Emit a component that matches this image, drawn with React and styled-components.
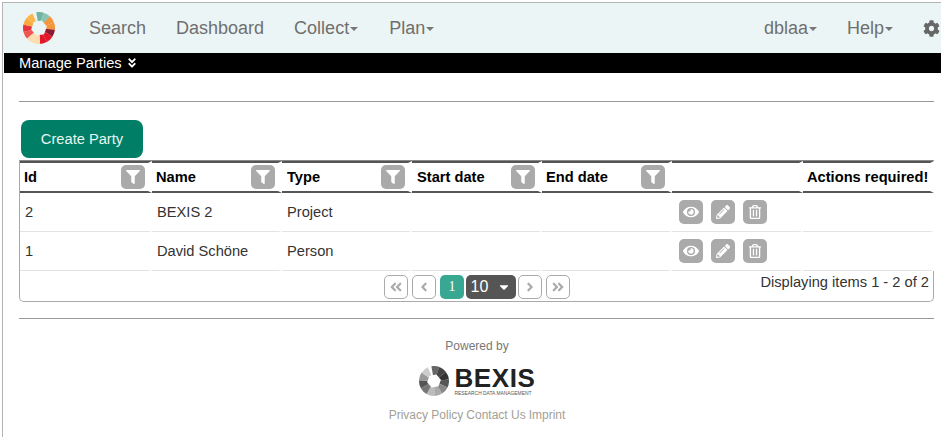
import React from 'react';
import styled, { createGlobalStyle } from 'styled-components';
import {
  FaFilter, FaEye, FaPencilAlt, FaRegTrashAlt, FaCog, FaAngleDoubleDown,
  FaAngleDoubleLeft, FaAngleDoubleRight, FaAngleLeft, FaAngleRight, FaCaretDown,
} from 'react-icons/fa';

const GlobalStyle = createGlobalStyle`
  html, body {
    margin: 0;
    padding: 0;
    background: #fff;
    font-family: "Liberation Sans", Arial, sans-serif;
    overflow: hidden;
  }
`;

const Page = styled.div`
  margin: 2px 0 0 2px;
  border-top: 1px solid #b4b4b4;
  border-left: 1px solid #b4b4b4;
  height: 434px;
  overflow: hidden;
`;

const NavBar = styled.nav`
  display: flex;
  align-items: center;
  height: 50px;
  background: #ecf5f5;
  padding-left: 20px;
`;

const NavLink = styled.a`
  display: inline-flex;
  align-items: center;
  color: #6f6f6f;
  font-size: 18px;
  margin-left: ${p => p.$gap}px;
`;

const Caret = styled.span`
  display: inline-block;
  margin-left: 1px;
  margin-top: 2px;
  border-top: 4px solid #777;
  border-left: 4px solid transparent;
  border-right: 4px solid transparent;
`;

const Spacer = styled.div`
  flex: 1;
`;

const Gear = styled(FaCog)`
  color: #666;
  font-size: 17px;
  margin: 0 1px 0 30px;
  flex: none;
`;

const SubBar = styled.div`
  display: flex;
  align-items: center;
  height: 20px;
  margin-left: 1px;
  padding-left: 15px;
  background: #000;
  color: #fff;
  font-size: 14.67px;
  gap: 4px;
  svg { font-size: 12px; }
`;

const Content = styled.main`
  padding: 28px 7px 0 16px;
`;

const Rule = styled.hr`
  margin: 0;
  border: 0;
  border-top: 1px solid #999;
`;

const CreateButton = styled.button`
  display: block;
  width: 122px;
  height: 38px;
  margin: 18px 0 2px 2px;
  border: 0;
  border-radius: 8px;
  background: #007f66;
  color: #e8f5f2;
  font-family: inherit;
  font-size: 14.67px;
`;

const TableBox = styled.div`
  height: 142px;
  box-sizing: border-box;
  border: 1px solid #aaa;
  border-top-color: #888;
  border-radius: 0 0 5px 5px;
  margin-bottom: 16px;
`;

const Table = styled.table`
  width: 914px;
  table-layout: fixed;
  border-collapse: separate;
  border-spacing: 0;
`;

const Th = styled.th`
  position: relative;
  box-sizing: border-box;
  height: 32px;
  padding: 0 ${p => (p.$right ? 2 : 0)}px 0 ${p => p.$pad || 4}px;
  text-align: ${p => (p.$right ? 'right' : 'left')};
  font-size: 14.67px;
  color: #000;
  border-top: 2px solid #555;
  border-bottom: 2px solid #555;
  border-right: 4px solid #fff;
  background-clip: padding-box;
  white-space: nowrap;
`;

const Td = styled.td`
  box-sizing: border-box;
  height: 39px;
  padding: 0 0 0 ${p => p.$pad || 5}px;
  font-size: 14.67px;
  color: #333;
  border-bottom: 1px solid #e3e3e3;
  border-right: 4px solid #fff;
`;

const IconButton = styled.span`
  display: inline-flex;
  align-items: center;
  justify-content: center;
  width: 24px;
  height: 24px;
  border-radius: 5px;
  background: #aaa;
  color: #fff;
  font-size: ${p => p.$size || 14}px;
`;

const FilterButton = styled(IconButton)`
  position: absolute;
  right: 3px;
  top: 2px;
`;

const Actions = styled.div`
  display: flex;
  gap: 8px;
`;

const Pager = styled.div`
  position: relative;
  display: flex;
  justify-content: center;
  align-items: center;
  gap: 4px;
  height: 24px;
  margin-top: 4px;
  padding-left: 1px;
`;

const PageBtn = styled.span`
  display: inline-flex;
  align-items: center;
  justify-content: center;
  box-sizing: border-box;
  width: 24px;
  height: 24px;
  border: 1px solid #aaa;
  border-radius: 5px;
  color: #aaa;
  font-size: 14px;
`;

const CurrentPage = styled(PageBtn)`
  border: 0;
  background: #38a892;
  color: #fff;
  font-family: "Liberation Serif", serif;
  font-size: 14px;
  margin-right: -2px;
`;

const SizeSelect = styled(PageBtn)`
  width: 50px;
  border: 0;
  background: #555;
  color: #fff;
  font-family: "Liberation Sans", sans-serif;
  font-size: 16px;
  gap: 9px;
  margin-right: -2px;
  svg { font-size: 14px; }
`;

const Count = styled.span`
  position: absolute;
  right: 4px;
  top: -1px;
  font-size: 14.67px;
  color: #333;
`;

const Footer = styled.footer`
  display: flex;
  flex-direction: column;
  align-items: center;
  padding: 20px 0 0 1px;
  font-size: 12px;
  color: #777;
`;

const BrandRow = styled.div`
  display: flex;
  align-items: center;
  gap: 5px;
  margin: 13px 0 12px 1px;
  height: 30px;
`;

const BrandText = styled.div`
  display: flex;
  flex-direction: column;
  color: #222;
`;

const BrandName = styled.span`
  font-size: 26px;
  line-height: 22px;
  font-weight: 700;
  letter-spacing: 0.6px;
  margin-bottom: 2px;
`;

const BrandSub = styled.span`
  font-size: 4.9px;
  line-height: 5px;
  color: #555;
  white-space: nowrap;
`;

const FooterLinks = styled.div`
  display: flex;
  gap: 3px;
  color: #a39f97;
`;

// ring cut in wedges with a six sided hole, used for both logos
const polar = (a, r) => {
  const t = (a * Math.PI) / 180;
  return `${(r * Math.cos(t)).toFixed(2)} ${(r * Math.sin(t)).toFixed(2)}`;
};

const wedge = (a1, a2, inner, outer) =>
  `M${polar(a1, inner)}L${polar(a1, outer)}A${outer} ${outer} 0 0 1 ${polar(a2, outer)}L${polar(a2, inner)}Z`;

const Ring = ({ size, colors, hole, bg }) => {
  const r = size / 2;
  const step = 345 / colors.length;
  const hex = [0, 1, 2, 3, 4, 5].map(i => polar(-70 + i * 60, hole)).join(' ');
  return (
    <svg width={size} height={size} viewBox={`${-r} ${-r} ${size} ${size}`}>
      {colors.map((c, i) => (
        <path key={i} d={wedge(-100 + i * step, -100 + (i + 1) * step + 0.4, hole - 2, r)} fill={c} />
      ))}
      <polygon points={hex} fill={bg} />
    </svg>
  );
};

const logoColors = [
  '#6fb3a0', '#8cc4b4', '#f5963a', '#f5963a', '#8a1a30', '#e3172b', '#e3172b',
  '#fddcae', '#fddcae', '#f0574f', '#e8323f', '#f9a93e', '#fbb54b',
];
const apertureColors = ['#666', '#444', '#333', '#555', '#888', '#aaa', '#bbb', '#777', '#555', '#999', '#ccc'];

const columns = ['Id', 'Name', 'Type', 'Start date', 'End date'];
const colWidths = [132, 130, 130, 130, 130, 131, 131];
const rows = [
  { id: 2, name: 'BEXIS 2', type: 'Project' },
  { id: 1, name: 'David Schöne', type: 'Person' },
];

export default function App() {
  return (
    <>
      <GlobalStyle />
      <Page>
        <NavBar>
          <Ring size={32} colors={logoColors} hole={8} bg="#ecf5f5" />
          <NavLink $gap={34}>Search</NavLink>
          <NavLink $gap={30}>Dashboard</NavLink>
          <NavLink $gap={30}>Collect<Caret /></NavLink>
          <NavLink $gap={31}>Plan<Caret /></NavLink>
          <Spacer />
          <NavLink $gap={0}>dblaa<Caret /></NavLink>
          <NavLink $gap={30}>Help<Caret /></NavLink>
          <Gear />
        </NavBar>
        <SubBar>Manage Parties <FaAngleDoubleDown /></SubBar>
        <Content>
          <Rule />
          <CreateButton>Create Party</CreateButton>
          <TableBox>
            <Table>
              <colgroup>
                {colWidths.map((w, i) => <col key={i} width={w} />)}
              </colgroup>
              <thead>
                <tr>
                  {columns.map(c => (
                    <Th key={c} $pad={c === 'Type' || c === 'Start date' ? 5 : 4}>
                      {c}
                      <FilterButton><FaFilter /></FilterButton>
                    </Th>
                  ))}
                  <Th />
                  <Th $right>Actions required!</Th>
                </tr>
              </thead>
              <tbody>
                {rows.map(r => (
                  <tr key={r.id}>
                    <Td>{r.id}</Td>
                    <Td>{r.name}</Td>
                    <Td>{r.type}</Td>
                    <Td />
                    <Td />
                    <Td $pad={7}>
                      <Actions>
                        <IconButton $size={16}><FaEye /></IconButton>
                        <IconButton><FaPencilAlt /></IconButton>
                        <IconButton><FaRegTrashAlt /></IconButton>
                      </Actions>
                    </Td>
                    <Td />
                  </tr>
                ))}
              </tbody>
            </Table>
            <Pager>
              <PageBtn><FaAngleDoubleLeft /></PageBtn>
              <PageBtn><FaAngleLeft /></PageBtn>
              <CurrentPage>1</CurrentPage>
              <SizeSelect>10 <FaCaretDown /></SizeSelect>
              <PageBtn><FaAngleRight /></PageBtn>
              <PageBtn><FaAngleDoubleRight /></PageBtn>
              <Count>Displaying items 1 - 2 of 2</Count>
            </Pager>
          </TableBox>
          <Rule />
          <Footer>
            Powered by
            <BrandRow>
              <Ring size={30} colors={apertureColors} hole={7} bg="#fff" />
              <BrandText>
                <BrandName>BEXIS</BrandName>
                <BrandSub>RESEARCH DATA MANAGEMENT</BrandSub>
              </BrandText>
            </BrandRow>
            <FooterLinks>
              <span>Privacy Policy</span>
              <span>Contact Us</span>
              <span>Imprint</span>
            </FooterLinks>
          </Footer>
        </Content>
      </Page>
    </>
  );
}
